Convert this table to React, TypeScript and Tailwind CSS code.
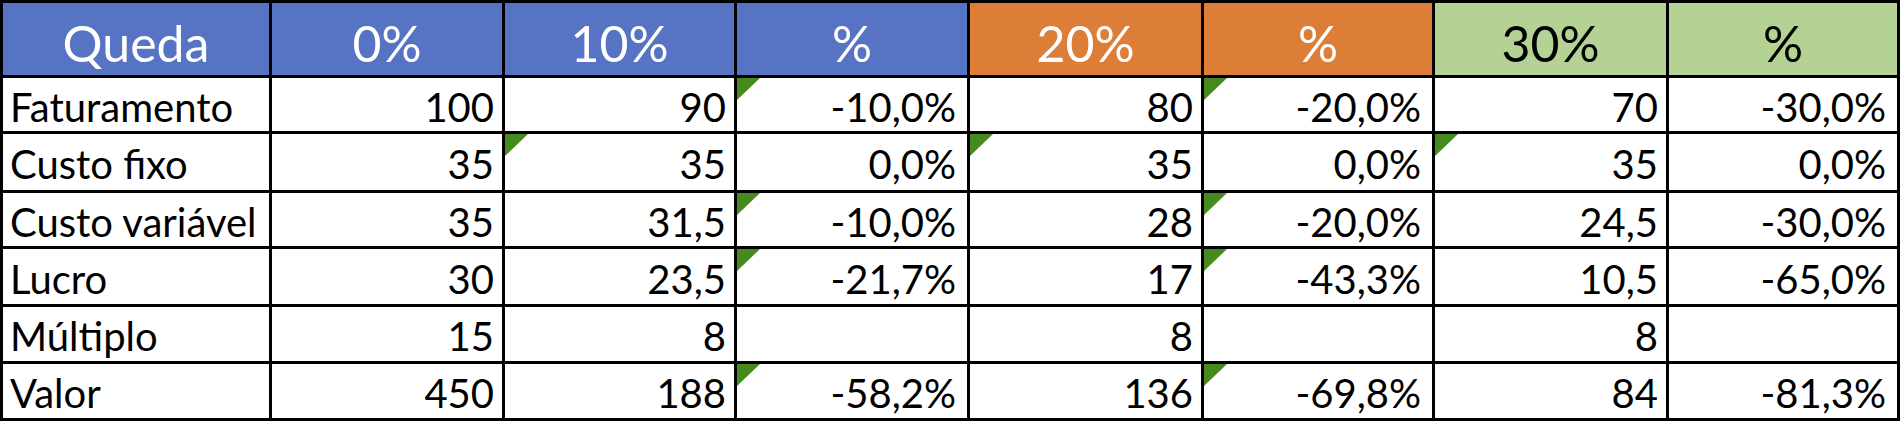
const cols = [
  { head: 'Queda', w: 'w-[269px]', bg: 'bg-[#5673c4]', fg: 'text-white' },
  { head: '0%', w: 'w-[233px]', bg: 'bg-[#5673c4]', fg: 'text-white' },
  { head: '10%', w: 'w-[232px]', bg: 'bg-[#5673c4]', fg: 'text-white' },
  { head: '%', w: 'w-[233px]', bg: 'bg-[#5673c4]', fg: 'text-white' },
  { head: '20%', w: 'w-[234px]', bg: 'bg-[#dc7d38]', fg: 'text-white' },
  { head: '%', w: 'w-[231px]', bg: 'bg-[#dc7d38]', fg: 'text-white' },
  { head: '30%', w: 'w-[234px]', bg: 'bg-[#b5d295]', fg: 'text-black' },
  { head: '%', w: 'w-[231px]', bg: 'bg-[#b5d295]', fg: 'text-black' },
];

// cell text, and which cells carry the green error marker
type Row = { h: string; cells: string[]; marks: number[] };

const rows: Row[] = [
  { h: 'h-[56px]', cells: ['Faturamento', '100', '90', '-10,0%', '80', '-20,0%', '70', '-30,0%'], marks: [3, 5] },
  { h: 'h-[59px]', cells: ['Custo fixo', '35', '35', '0,0%', '35', '0,0%', '35', '0,0%'], marks: [2, 4, 6] },
  { h: 'h-[56px]', cells: ['Custo variável', '35', '31,5', '-10,0%', '28', '-20,0%', '24,5', '-30,0%'], marks: [3, 5] },
  { h: 'h-[58px]', cells: ['Lucro', '30', '23,5', '-21,7%', '17', '-43,3%', '10,5', '-65,0%'], marks: [3, 5] },
  { h: 'h-[57px]', cells: ['Múltiplo', '15', '8', '', '8', '', '8', ''], marks: [] },
  { h: 'h-[57px]', cells: ['Valor', '450', '188', '-58,2%', '136', '-69,8%', '84', '-81,3%'], marks: [3, 5] },
];

export default function App() {
  return (
    <div className="w-[1900px] h-[422px] bg-white font-['Lato','Liberation_Sans',sans-serif]">
      <div className="inline-flex flex-col border-t-[3px] border-l-[3px] border-black">
        <div className="flex h-[75px]">
          {cols.map((c, i) => (
            <div
              key={i}
              className={`${c.w} ${c.bg} ${c.fg} flex items-center justify-center pt-[8px] border-r-[3px] border-b-[3px] border-black text-[50px] leading-none whitespace-nowrap`}
            >
              {c.head}
            </div>
          ))}
        </div>
        {rows.map((r, ri) => (
          <div key={ri} className={`flex ${r.h}`}>
            {r.cells.map((t, ci) => (
              <div
                key={ci}
                className={`${cols[ci].w} relative flex items-center pt-[4px] border-r-[3px] border-b-[3px] border-black leading-none text-black whitespace-nowrap ${
                  ci === 0
                    ? 'justify-start pl-[7px] text-[40px]'
                    : ci % 2 === 1 && ci > 1
                      ? 'justify-end pr-[11px] text-[40px]'
                      : 'justify-end pr-[8px] text-[40px]'
                }`}
              >
                {r.marks.includes(ci) && (
                  <span className="absolute top-0 left-0 w-[23px] h-[22px] bg-[#46891f] [clip-path:polygon(0_0,100%_0,0_100%)]" />
                )}
                {t}
              </div>
            ))}
          </div>
        ))}
      </div>
    </div>
  );
}
